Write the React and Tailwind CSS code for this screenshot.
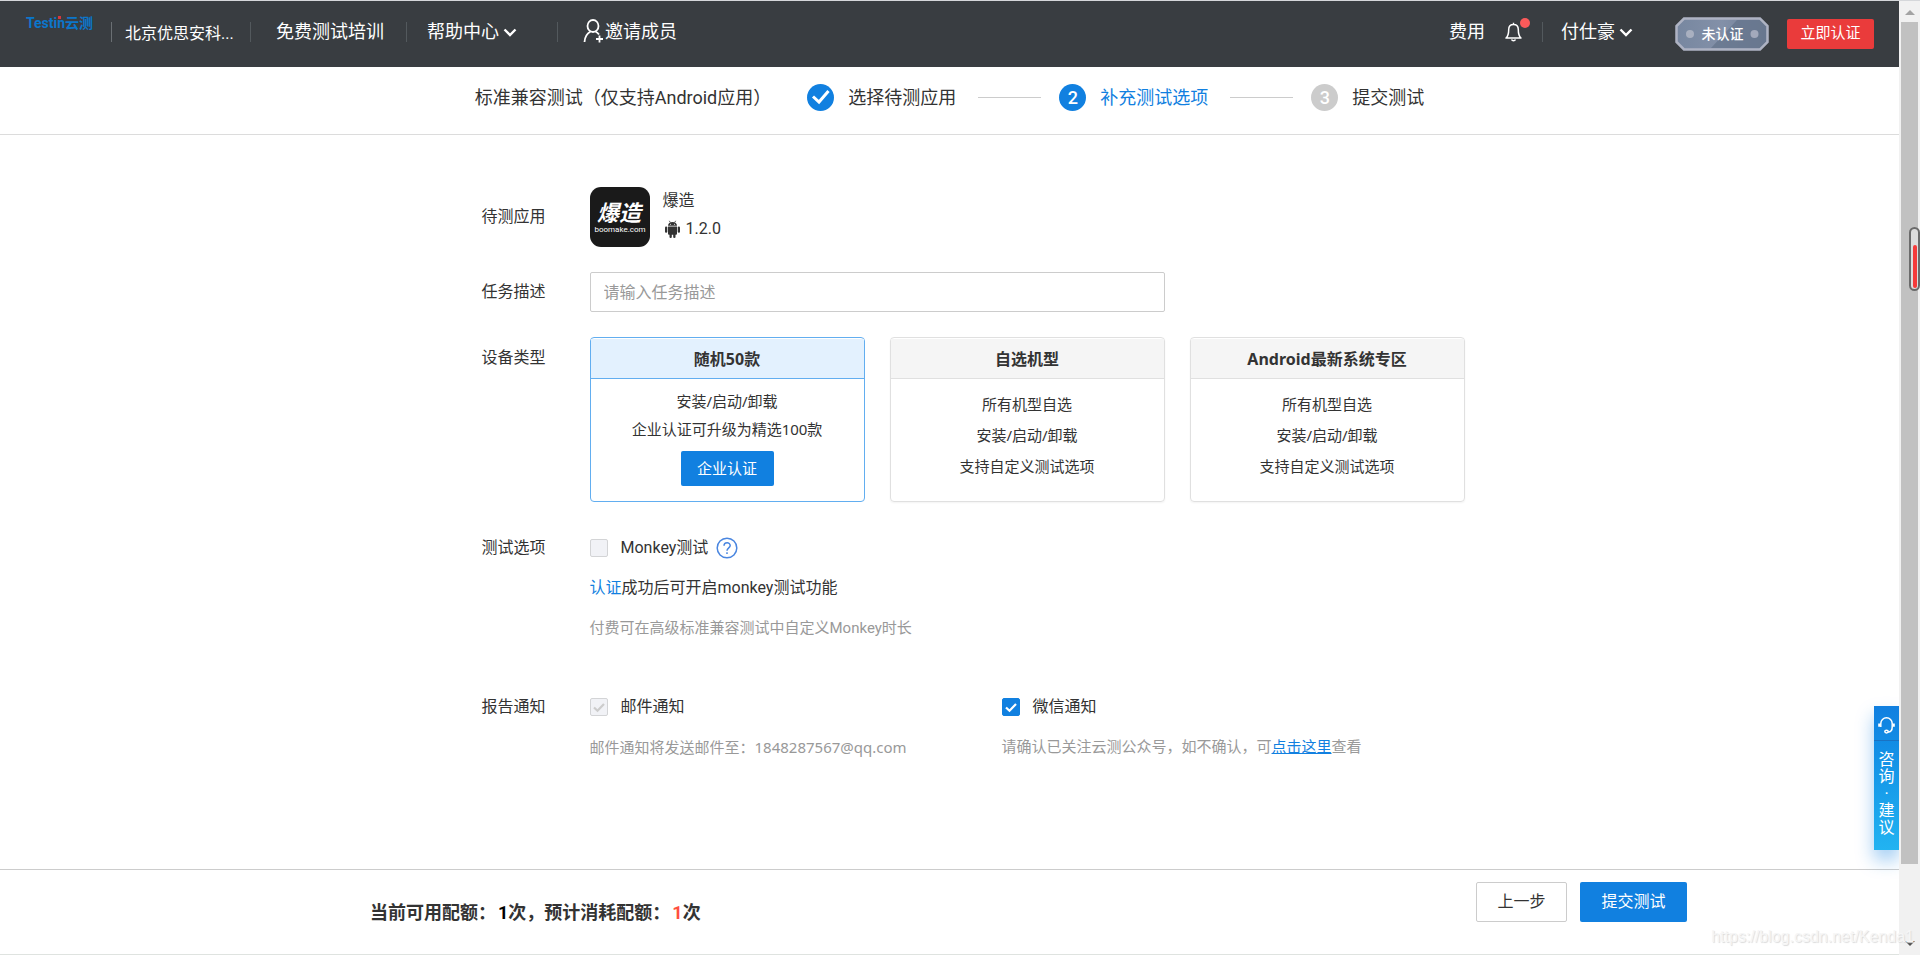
import React from "react";

const devices = [
  {
    title: "随机50款",
    lines: ["安装/启动/卸载", "企业认证可升级为精选100款"],
    action: "企业认证",
    active: true,
  },
  {
    title: "自选机型",
    lines: ["所有机型自选", "安装/启动/卸载", "支持自定义测试选项"],
  },
  {
    title: "Android最新系统专区",
    lines: ["所有机型自选", "安装/启动/卸载", "支持自定义测试选项"],
  },
];

const steps = [
  { label: "选择待测应用", state: "done" },
  { label: "补充测试选项", state: "current" },
  { label: "提交测试", state: "todo" },
];

function Chevron() {
  return (
    <svg className="ml-1 h-[14px] w-[14px]" viewBox="0 0 14 14" fill="none" stroke="#fff" strokeWidth="2.4">
      <path d="M1.5 4.5 7 10l5.5-5.5" />
    </svg>
  );
}

function Divider() {
  return <span className="h-5 w-px shrink-0 bg-[#53595d]"></span>;
}

function AuthBadge() {
  return (
    <svg className="h-[34px] w-[94px]" viewBox="0 0 94 34">
      <defs>
        <linearGradient id="badge" x1="0" y1="0" x2="1" y2="0">
          <stop offset="0" stopColor="#7787a0" />
          <stop offset="0.5" stopColor="#8390a8" />
          <stop offset="1" stopColor="#6f7d94" />
        </linearGradient>
      </defs>
      <path d="M9 1.5h76l7.5 7.5v16l-7.5 7.5H9L1.5 25V9z" fill="url(#badge)" stroke="#aeb3c3" strokeWidth="2.5" />
      <path d="M62 3h22.500l6.500 6.500v15L84.500 31H36z" fill="#66758d" opacity="0.8" />
      <circle cx="15" cy="17" r="4" fill="#a9b0c0" />
      <circle cx="79.5" cy="17" r="4" fill="#a3a9bb" />
      <text x="47.5" y="22" textAnchor="middle" fill="#fff" className="text-[14px] font-medium">
        未认证
      </text>
    </svg>
  );
}

function Header() {
  return (
    <header className="flex h-[67px] items-center justify-between border-t border-[#d5d7da] bg-[#393d41] pl-[26px] pr-[25px] text-lg text-white">
      <div className="flex h-full items-center whitespace-nowrap pb-1">
        <a href="#" className="relative w-[69px] self-start pt-[14px] text-[14px] leading-4 font-bold text-[#0b76cb]">
          Testin云测
          <span className="absolute left-[32px] top-[15px] h-[3px] w-[3px] bg-[#d9363c]"></span>
        </a>
        <span className="ml-4 h-5 w-px bg-[#6a6f73]"></span>
        <span className="ml-[13px] mr-[13px] w-28 pt-[3px] text-base">北京优思安科...</span>
        <Divider />
        <a href="#" className="ml-[25px] mr-[22px]">免费测试培训</a>
        <Divider />
        <a href="#" className="ml-5 mr-10 flex items-center">
          帮助中心
          <Chevron />
        </a>
        <Divider />
        <a href="#" className="ml-[25px] flex items-center">
          <svg className="h-[28px] w-[22px]" viewBox="0 0 22 28" fill="none" stroke="#fff" strokeWidth="1.8">
            <ellipse cx="10" cy="8" rx="5.5" ry="6" />
            <path d="M7.500 13.500C4 15.500 1.800 19 1.500 24M12.500 13.500c1.500.8 2.500 1.600 3.500 3M13 21h7M16.500 17.500v7" />
          </svg>
          邀请成员
        </a>
      </div>
      <div className="flex items-center whitespace-nowrap">
        <div className="flex items-center pb-1">
          <a href="#">费用</a>
          <button aria-label="消息" className="relative ml-5 mr-5">
            <svg className="h-5 w-[17px]" viewBox="0 0 17 20" fill="none" stroke="#fff" strokeWidth="1.5" strokeLinejoin="round">
              <path d="M8.500 2.500c-3 0-4.800 2-4.800 5 0 5-.8 7-2.700 8.500h15c-1.900-1.500-2.700-3.500-2.700-8.500 0-3-1.800-5-4.800-5zM8.500 2.500V.8M6.500 17.500c.8 1.600 3.200 1.600 4 0" />
            </svg>
            <span className="absolute -right-2 -top-1 h-[10px] w-[10px] rounded-full bg-[#fa5a5a]"></span>
          </button>
          <Divider />
          <a href="#" className="ml-[18px] flex items-center">
            付仕豪
            <Chevron />
          </a>
        </div>
        <a href="#" aria-label="未认证" className="ml-[42px]">
          <AuthBadge />
        </a>
        <button className="ml-[18px] h-[30px] w-[87px] rounded-xs bg-[#ea3b3b] text-[15px]">立即认证</button>
      </div>
    </header>
  );
}

function StepIcon({ state, index }) {
  if (state === "done") {
    return (
      <span className="flex h-[27px] w-[27px] items-center justify-center rounded-full bg-[#1180e0]">
        <svg className="h-[27px] w-[27px]" viewBox="0 0 27 27" fill="none" stroke="#fff" strokeWidth="3">
          <path d="m6 12.500 6 5.500 9.500-11" />
        </svg>
      </span>
    );
  }
  return (
    <span
      className={
        state === "current"
          ? "flex h-[27px] w-[27px] items-center justify-center rounded-full bg-[#1180e0] text-lg font-medium text-white"
          : "flex h-[27px] w-[27px] items-center justify-center rounded-full bg-[#cccccc] text-lg font-medium text-white"
      }
    >
      {index}
    </span>
  );
}

function Stepper() {
  return (
    <div className="flex h-[68px] items-center justify-center whitespace-nowrap border-b border-[#dcdcdc] pb-1.5 text-lg">
      <h1 className="mr-9">标准兼容测试（仅支持Android应用）</h1>
      <ol className="flex items-center">
        {steps.map((step, i) => (
          <li key={step.label} className="flex items-center">
            {i > 0 && <span className="ml-[22px] mr-[18px] h-px w-[63px] bg-[#cccccc]"></span>}
            <StepIcon state={step.state} index={i + 1} />
            <span className={step.state === "current" ? "ml-[14px] text-[#1180e0]" : "ml-[14px]"}>{step.label}</span>
          </li>
        ))}
      </ol>
    </div>
  );
}

function Row({ label, htmlFor, className, labelClass, children }) {
  const Tag = htmlFor ? "label" : "div";
  return (
    <div className={"flex " + className}>
      <Tag htmlFor={htmlFor} className={"w-60 shrink-0 pr-11 text-right " + (labelClass || "")}>
        {label}
      </Tag>
      <div className="min-w-0 flex-1">{children}</div>
    </div>
  );
}

function AppLogo() {
  return (
    <svg className="h-[60px] w-[60px]" viewBox="0 0 60 60">
      <rect width="60" height="60" rx="11" fill="#1a1a1a" />
      <text x="29" y="34" textAnchor="middle" fill="#fff" className="text-[22px] font-bold italic">
        爆造
      </text>
      <text x="30" y="45" textAnchor="middle" fill="#fff" className="text-[8px]">
        boomake.com
      </text>
    </svg>
  );
}

function AndroidIcon() {
  return (
    <svg className="mr-1 h-[19px] w-[19px]" viewBox="0 0 19 19" fill="#333">
      <path d="M5 5.800C5 3.400 6.900 2 9.500 2S14 3.400 14 5.800z" />
      <path d="M6.300.8 7.400 2.600M12.700.8l-1.100 1.800" stroke="#333" strokeWidth="0.8" />
      <path d="M5 6.400h9v7.300a1 1 0 0 1-1 1H6a1 1 0 0 1-1-1z" />
      <rect x="2" y="6.400" width="2.300" height="6.400" rx="1.100" />
      <rect x="14.700" y="6.400" width="2.300" height="6.400" rx="1.100" />
      <rect x="6.500" y="12" width="2.300" height="6" rx="1.100" />
      <rect x="10.200" y="12" width="2.300" height="6" rx="1.100" />
      <circle cx="7.500" cy="4.200" r="0.500" fill="#fff" />
      <circle cx="11.500" cy="4.200" r="0.500" fill="#fff" />
    </svg>
  );
}

function DeviceCard({ device }) {
  return (
    <div
      className={
        device.active
          ? "h-[165px] w-[275px] rounded-sm border border-[#62aef0] text-center"
          : "h-[165px] w-[275px] rounded-sm border border-[#e0e0e0] text-center shadow-xs"
      }
    >
      <h2
        className={
          device.active
            ? "mt-px h-10 border-b border-[#62aef0] bg-[#e3f1fe] leading-10 font-bold"
            : "mt-px h-10 border-b border-[#e0e0e0] bg-[#f5f5f5] leading-10 font-bold"
        }
      >
        {device.title}
      </h2>
      <div className={device.active ? "pt-2 text-[15px] leading-7" : "pt-[10px] text-[15px] leading-[31px]"}>
        {device.lines.map((line) => (
          <p key={line}>{line}</p>
        ))}
      </div>
      {device.action && (
        <button className="mt-2 h-[35px] w-[93px] rounded-xs bg-[#1180e0] text-[15px] text-white">{device.action}</button>
      )}
    </div>
  );
}

function Checkbox({ id, label, checked, disabled }) {
  return (
    <div className="flex h-6 items-center">
      <span className="relative h-[18px] w-[18px]">
        <input
          id={id}
          type="checkbox"
          defaultChecked={checked}
          disabled={disabled}
          className="peer block h-[18px] w-[18px] appearance-none rounded-xs border border-[#cccccc] bg-white checked:border-[#1180e0] checked:bg-[#1180e0] disabled:border-[#d3d4d6] disabled:bg-[#f1f2f6]"
        />
        <svg
          className={
            disabled
              ? "pointer-events-none absolute inset-0 hidden stroke-[#cccccc] peer-checked:block"
              : "pointer-events-none absolute inset-0 hidden stroke-white peer-checked:block"
          }
          viewBox="0 0 18 18"
          fill="none"
          strokeWidth="2.2"
        >
          <path d="m4 9.500 3.500 3.300L14 6" />
        </svg>
      </span>
      <label htmlFor={id} className="ml-[13px]">
        {label}
      </label>
    </div>
  );
}

function SupportTab() {
  return (
    <a
      href="#"
      className="absolute bottom-[105px] right-0 flex h-36 w-[25px] flex-col items-center bg-linear-to-b from-[#107fe0] to-[#22b3f1] text-base text-white shadow-[0_10px_18px_rgba(17,128,224,0.4)]"
    >
      <span className="flex h-[35px] w-full items-center justify-center border-b border-[#1a72c2]">
        <svg className="mt-1 h-[17px] w-[17px]" viewBox="0 0 17 17" fill="none" stroke="#fff" strokeWidth="1.5">
          <path d="M2.800 10V6.500a5.700 5.700 0 0 1 11.400 0V10c0 3-1.700 5-4.200 5" />
          <path d="M1.200 6.500v3.200M15.800 6.500v3.200" strokeWidth="2" />
          <ellipse cx="8.500" cy="14.600" rx="1.700" ry="1.400" />
        </svg>
      </span>
      <span className="flex flex-col items-center pt-[10px] leading-[17px]">
        <span>咨</span>
        <span>询</span>
        <span>·</span>
        <span>建</span>
        <span>议</span>
      </span>
    </a>
  );
}

function ScrollRail() {
  return (
    <div className="relative flex w-[21px] shrink-0 flex-col items-center border-t border-[#d5d7da] bg-[#f1f1f1]">
      <svg className="h-[21px] w-[10px] shrink-0" viewBox="0 0 10 21">
        <path d="M0 14h10L5 9z" fill="#a3a3a3" />
      </svg>
      <div className="w-[17px] flex-1 bg-[#c1c1c1]"></div>
      <svg className="h-[91px] w-[10px] shrink-0" viewBox="0 0 10 91">
        <path d="M0 77h10l-5 5z" fill="#505050" />
      </svg>
      {/* usage gauge over the rail */}
      <div className="absolute right-0 top-[226px] flex h-16 w-[11px] items-end justify-center rounded-full border-2 border-[#6b6b6b] bg-[#dddddd] pb-px">
        <div className="h-[43px] w-1 rounded-full bg-[#f53b3b]"></div>
      </div>
    </div>
  );
}

function App() {
  return (
    <div className="relative flex min-h-screen bg-white font-['Roboto','Noto_Sans_CJK_SC',sans-serif] text-base text-[#333333]">
      <div className="relative flex min-w-0 flex-1 flex-col overflow-hidden">
        <Header />
        <Stepper />
        <main className="mx-auto w-full max-w-[1200px] flex-1 pt-[52px]">
          <Row label="待测应用" className="items-center">
            <div className="flex">
              <AppLogo />
              <div className="ml-[13px]">
                <p className="leading-7">爆造</p>
                <p className="flex items-center leading-7">
                  <AndroidIcon />
                  1.2.0
                </p>
              </div>
            </div>
          </Row>
          <Row label="任务描述" htmlFor="desc" className="mt-[25px] items-center">
            <input
              id="desc"
              type="text"
              placeholder="请输入任务描述"
              className="block h-10 w-full max-w-[575px] rounded-xs border border-[#cccccc] px-[13px] placeholder:text-[#999999]"
            />
          </Row>
          <Row label="设备类型" className="mt-[25px]" labelClass="pt-[9px]">
            <div className="flex gap-[25px] font-['Noto_Sans','Noto_Sans_CJK_SC',sans-serif]">
              {devices.map((device) => (
                <DeviceCard key={device.title} device={device} />
              ))}
            </div>
          </Row>
          <Row label="测试选项" className="mt-[34px]">
            <div className="flex flex-col gap-4">
              <div className="flex items-center">
                <Checkbox id="monkey" label="Monkey测试" disabled />
                <button aria-label="帮助" className="ml-2">
                  <svg className="h-[22px] w-[22px]" viewBox="0 0 22 22" fill="none" stroke="#4a86e0" strokeWidth="1.5">
                    <circle cx="11" cy="11" r="9.8" />
                    <path d="M8 8.800c0-4 6.200-4 6.200-.2 0 2.300-3.200 2.400-3.200 5.200M11 15.200v1.800" />
                  </svg>
                </button>
              </div>
              <p>
                <a href="#" className="text-[#1180e0]">认证</a>成功后可开启monkey测试功能
              </p>
              <p className="text-[15px] leading-6 text-[#999999]">付费可在高级标准兼容测试中自定义Monkey时长</p>
            </div>
          </Row>
          <Row label="报告通知" className="mt-[55px]">
            <div className="flex">
              <div className="flex w-[412px] flex-col gap-4">
                <Checkbox id="mail" label="邮件通知" checked disabled />
                <p className="font-['Noto_Sans','Noto_Sans_CJK_SC',sans-serif] text-[15px] leading-6 text-[#999999]">
                  邮件通知将发送邮件至：1848287567@qq.com
                </p>
              </div>
              <div className="flex flex-col gap-4">
                <Checkbox id="wechat" label="微信通知" checked />
                <p className="text-[15px] leading-6 text-[#999999]">
                  请确认已关注云测公众号，如不确认，可
                  <a href="#" className="text-[#1180e0] underline">点击这里</a>查看
                </p>
              </div>
            </div>
          </Row>
        </main>
        <footer className="flex h-[86px] items-start justify-between border-y border-t-[#cccccc] border-b-[#dfe3e0] pl-[370px] pr-[212px] pt-3">
          <p className="flex pt-[17px] text-lg font-bold">
            当前可用配额：<span className="ml-0.5 text-black">1</span>次，预计消耗配额：
            <span className="ml-0.5 text-[#ff4f3f]">1</span>次
          </p>
          <div className="flex gap-[13px]">
            <button className="h-10 w-[91px] rounded-xs border border-[#cccccc] bg-white">上一步</button>
            <button className="h-10 w-[107px] rounded-xs bg-[#1180e0] text-white">提交测试</button>
          </div>
        </footer>
        <SupportTab />
      </div>
      <ScrollRail />
      <span className="pointer-events-none absolute bottom-1.5 right-1.5 font-['Liberation_Sans',sans-serif] text-base leading-6 text-[#f6f6f6] [text-shadow:1px_1px_1px_#dadada]">
        https://blog.csdn.net/Kenda1
      </span>
    </div>
  );
}

export default App;
